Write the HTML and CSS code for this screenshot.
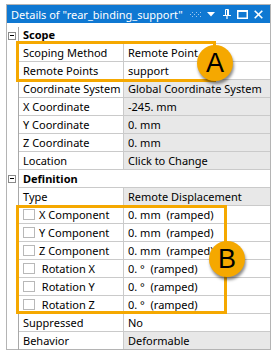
FILE: index.html
```html
<!DOCTYPE html>
<html>
<head>
  <title>Details</title>
  <link rel="stylesheet" href="styles.css">
</head>
<body>
  <div class="panel">
    <div class="titlebar">
      <span class="title">Details of "rear_binding_support"</span>
      <span class="tools">
        <svg class="grip" width="12" height="5" viewBox="0 0 12 5">
          <g fill="#9cc6ee">
            <rect x="0" y="2" width="1" height="1"/><rect x="2" y="0" width="1" height="1"/><rect x="2" y="4" width="1" height="1"/>
            <rect x="4" y="2" width="1" height="1"/><rect x="6" y="0" width="1" height="1"/><rect x="6" y="4" width="1" height="1"/>
            <rect x="8" y="2" width="1" height="1"/><rect x="10" y="0" width="1" height="1"/><rect x="10" y="4" width="1" height="1"/>
          </g>
        </svg>
        <svg class="drop" width="8" height="5" viewBox="0 0 8 5"><path d="M0 0H8L4 4.5Z" fill="#fff"/></svg>
        <svg class="pin" width="8" height="10" viewBox="0 0 8 10">
          <path d="M2.5 0.5H5.5V6.5M2.5 0.5V6.5" stroke="#fff" fill="none"/>
          <rect x="4" y="1" width="1.5" height="5.5" fill="#fff"/>
          <path d="M0 6.5H8M4 7V10" stroke="#fff" stroke-width="1.2"/>
        </svg>
        <svg class="max" width="11" height="9" viewBox="0 0 11 9"><rect x="0.75" y="1" width="9.5" height="7.25" fill="none" stroke="#fff" stroke-width="1.5"/><rect x="0" y="0" width="11" height="2" fill="#fff"/></svg>
        <svg class="close" width="9" height="9" viewBox="0 0 9 9"><path d="M0.7 0.7L8.3 8.3M8.3 0.7L0.7 8.3" stroke="#fff" stroke-width="1.6"/></svg>
      </span>
    </div>

    <div class="rows">
      <div class="row">
        <div class="tree"><span class="toggle"></span></div>
        <div class="head">Scope</div>
      </div>
      <div class="row">
        <div class="tree"></div>
        <div class="label">Scoping Method</div>
        <div class="value">Remote Point</div>
      </div>
      <div class="row">
        <div class="tree"></div>
        <div class="label">Remote Points</div>
        <div class="value">support</div>
      </div>
      <div class="row">
        <div class="tree"></div>
        <div class="label">Coordinate System</div>
        <div class="value locked">Global Coordinate System</div>
      </div>
      <div class="row">
        <div class="tree"></div>
        <div class="label">X Coordinate</div>
        <div class="value locked">-245. mm</div>
      </div>
      <div class="row">
        <div class="tree"></div>
        <div class="label">Y Coordinate</div>
        <div class="value locked">0. mm</div>
      </div>
      <div class="row">
        <div class="tree"></div>
        <div class="label">Z Coordinate</div>
        <div class="value locked">0. mm</div>
      </div>
      <div class="row">
        <div class="tree"></div>
        <div class="label">Location</div>
        <div class="value locked">Click to Change</div>
      </div>
      <div class="row">
        <div class="tree"><span class="toggle"></span></div>
        <div class="head">Definition</div>
      </div>
      <div class="row">
        <div class="tree"></div>
        <div class="label">Type</div>
        <div class="value locked">Remote Displacement</div>
      </div>
      <div class="row">
        <div class="tree"></div>
        <div class="label"><span class="check"></span>X Component</div>
        <div class="value">0. mm  (ramped)</div>
      </div>
      <div class="row">
        <div class="tree"></div>
        <div class="label"><span class="check"></span>Y Component</div>
        <div class="value">0. mm  (ramped)</div>
      </div>
      <div class="row">
        <div class="tree"></div>
        <div class="label"><span class="check"></span>Z Component</div>
        <div class="value">0. mm  (ramped)</div>
      </div>
      <div class="row">
        <div class="tree"></div>
        <div class="label"><span class="check"></span> Rotation X</div>
        <div class="value">0. °  (ramped)</div>
      </div>
      <div class="row">
        <div class="tree"></div>
        <div class="label"><span class="check"></span> Rotation Y</div>
        <div class="value">0. °  (ramped)</div>
      </div>
      <div class="row">
        <div class="tree"></div>
        <div class="label"><span class="check"></span> Rotation Z</div>
        <div class="value">0. °  (ramped)</div>
      </div>
      <div class="row">
        <div class="tree"></div>
        <div class="label">Suppressed</div>
        <div class="value">No</div>
      </div>
      <div class="row">
        <div class="tree"></div>
        <div class="label">Behavior</div>
        <div class="value locked">Deformable</div>
      </div>
    </div>

    <!-- callouts -->
    <div class="callout callout-a"></div>
    <div class="callout callout-b"></div>
    <span class="badge badge-a">A</span>
    <span class="badge badge-b">B</span>
  </div>
</body>
</html>
```

FILE: styles.css
```css
body {
  margin: 0;
  background-color: #fff;
  font-family: "Noto Sans", "Open Sans", sans-serif;
  font-size: 11px;
  color: #000;
}

.panel {
  position: relative;
  box-sizing: border-box;
  width: 265px;
  height: 346px;
  margin: 4px 0 0 6px;
  border: 1px solid #b4b4b4;
}

.titlebar {
  display: flex;
  align-items: center;
  height: 18px;
  padding: 0 7px 0 4px;
  background-color: #0f78d2;
  color: #fff;
}

.title {
  flex: 1;
  font-size: 11px;
  white-space: nowrap;
}

.tools {
  display: flex;
  align-items: center;
}

.tools .drop {
  margin-left: 5px;
}

.tools .pin {
  margin-left: 8px;
}

.tools .max {
  margin-left: 6px;
}

.tools .close {
  margin-left: 6px;
}

.rows {
  margin-top: 3px;
}

.row {
  display: flex;
  height: 18px;
}

.tree {
  position: relative;
  width: 11px;
  border-right: 1px solid #a8a8a8;
}

.row:first-child .tree {
  margin-top: 1px;
}

.toggle {
  position: absolute;
  left: 1px;
  top: 5px;
  box-sizing: border-box;
  width: 8px;
  height: 8px;
  border: 1px solid #8a8a8a;
  background-color: #fff;
}

.toggle::after {
  content: "";
  position: absolute;
  left: 1px;
  top: 2px;
  width: 4px;
  height: 1px;
  background-color: #000;
}

.head,
.label,
.value {
  display: flex;
  align-items: center;
  box-sizing: border-box;
  height: 18px;
  padding-left: 4px;
  border-bottom: 1px solid #cacaca;
  white-space: pre;
}

.head {
  flex: 1;
  font-weight: bold;
}

.label {
  width: 105px;
  border-right: 1px solid #cacaca;
}

.value {
  flex: 1;
}

.value.locked {
  background-color: #e8e8e8;
}

.row:last-child .label,
.row:last-child .value {
  border-bottom: none;
  height: 17px;
}

.check {
  box-sizing: border-box;
  width: 12px;
  height: 11px;
  margin-right: 4px;
  border: 1px solid #b8b8b8;
  background-color: #fff;
}

.callout {
  position: absolute;
  box-sizing: border-box;
  border: 3px solid #f5a800;
}

.callout-a {
  left: 9px;
  top: 36px;
  width: 200px;
  height: 41px;
}

.callout-b {
  left: 9px;
  top: 200px;
  width: 211px;
  height: 109px;
}

.badge {
  position: absolute;
  width: 36px;
  height: 36px;
  border-radius: 50%;
  background-color: #f5a800;
  box-shadow: 1px 3px 3px rgba(0, 0, 0, 0.45);
  font-family: "Liberation Sans", Arial, sans-serif;
  font-size: 27px;
  line-height: 37px;
  text-align: center;
  color: #000;
}

.badge-a {
  left: 190px;
  top: 40px;
}

.badge-b {
  left: 202px;
  top: 236px;
}
```
